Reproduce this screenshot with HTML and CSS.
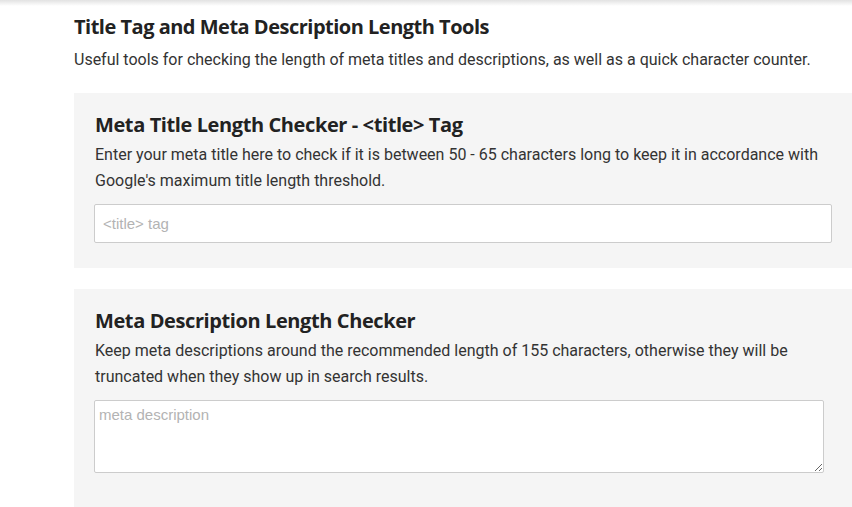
FILE: index.html
```html
<!DOCTYPE html>
<html lang="en">
<head>
  <meta charset="UTF-8">
  <meta name="viewport" content="width=device-width, initial-scale=1.0">
  <title>Title Tag and Meta Description Length Tools</title>
  <link rel="stylesheet" href="styles.css">
</head>
<body>

  <div class="top-shadow"></div>

  <div class="page">
    <h1>Title Tag and Meta Description Length Tools</h1>
    <p class="intro">Useful tools for checking the length of meta titles and descriptions, as well as a quick character counter.</p>

    <div class="tool-box">
      <h2>Meta Title Length Checker - &lt;title&gt; Tag</h2>
      <p>Enter your meta title here to check if it is between 50 - 65 characters long to keep it in accordance with Google's maximum title length threshold.</p>
      <input type="text" class="title-input" placeholder="<title> tag">
    </div>

    <div class="tool-box last">
      <h2>Meta Description Length Checker</h2>
      <p>Keep meta descriptions around the recommended length of 155 characters, otherwise they will be truncated when they show up in search results.</p>
      <textarea class="desc-input" placeholder="meta description"></textarea>
    </div>
  </div>

</body>
</html>
```

FILE: styles.css
```css
html, body {
  overflow: hidden;
}

body {
  margin: 0;
  padding: 0;
  background-color: #fff;
  font-family: Roboto, 'Liberation Sans', sans-serif;
  color: #333;
}

.top-shadow {
  height: 6px;
  background: linear-gradient(to bottom, #e2e2e2, #fff);
}

.page {
  margin-left: 74px;
  width: 800px;
  padding-top: 8px;
}

h1 {
  font-family: 'Open Sans', sans-serif;
  font-weight: 700;
  font-size: 20px;
  letter-spacing: -0.5px;
  color: #222;
  margin: 0 0 7px;
  line-height: 26px;
}

.intro {
  font-size: 16px;
  line-height: 26px;
  margin: 0 0 20px;
}

.tool-box {
  background-color: #f5f5f5;
  padding: 19px 0 25px 21px;
  margin-bottom: 21px;
}

.tool-box.last {
  padding-bottom: 34px;
  margin-bottom: 0;
}

h2 {
  font-family: 'Open Sans', sans-serif;
  font-weight: 700;
  font-size: 20px;
  letter-spacing: -0.4px;
  color: #222;
  margin: 0 0 4px;
  line-height: 26px;
}

.tool-box p {
  font-size: 16px;
  line-height: 26px;
  margin: 1px 0 10px;
  width: 735px;
}

.title-input {
  display: block;
  width: 738px;
  height: 39px;
  margin-left: -1px;
  padding: 0 8px;
  box-sizing: border-box;
  border: 1px solid #ccc;
  border-radius: 2px;
  font-family: 'Liberation Sans', Arial, sans-serif;
  font-size: 15px;
  background: #fff;
}

.desc-input {
  display: block;
  width: 730px;
  height: 73px;
  margin-left: -1px;
  padding: 5px 4px;
  box-sizing: border-box;
  border: 1px solid #ccc;
  border-radius: 2px;
  font-family: 'Liberation Sans', Arial, sans-serif;
  font-size: 15px;
  background: #fff;
}

::placeholder {
  color: #b3b3b3;
}
```
